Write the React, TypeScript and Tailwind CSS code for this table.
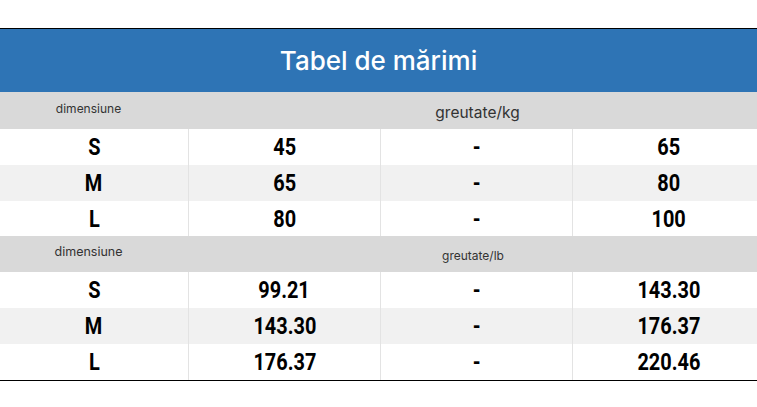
import React from "react";

const kg = [
  ["S", "45", "-", "65"],
  ["M", "65", "-", "80"],
  ["L", "80", "-", "100"],
];
const lb = [
  ["S", "99.21", "-", "143.30"],
  ["M", "143.30", "-", "176.37"],
  ["L", "176.37", "-", "220.46"],
];

const numFont = { fontFamily: 'Roboto, "DejaVu Sans Condensed", sans-serif' };

function Rows({ data, last }: { data: string[][]; last: string }) {
  return (
    <>
      {data.map((r, i) => (
        <div
          key={i}
          className={`grid grid-cols-[189px_192px_192px_1fr] ${i === 2 ? last : "h-[36px]"} ${i === 1 ? "bg-[#f1f1f1]" : "bg-white"}`}
        >
          {r.map((c, j) => (
            <div
              key={j}
              className={`flex items-center justify-center ${j < 3 ? "border-r border-[#e3e3e3]" : "pl-[7px]"}`}
            >
              <span
                className="inline-block scale-x-[0.83] text-[24px] leading-none font-bold text-black"
                style={numFont}
              >
                {c}
              </span>
            </div>
          ))}
        </div>
      ))}
    </>
  );
}

export default function App() {
  return (
    <div className="w-[757px] h-[407px] bg-white" style={{ fontFamily: 'Inter, "Noto Sans", sans-serif' }}>
      <div className="h-[28px]" />
      <div className="border-t border-black" />
      <div className="h-[63px] bg-[#2e74b5] flex items-center justify-center text-white text-[26px] font-medium">
        Tabel de mărimi
      </div>
      <div className="h-[37px] bg-[#d9d9d9] grid grid-cols-[189px_1fr] text-[#333]">
        <div className="flex items-center justify-center text-[12px] pb-[4px] pr-[12px]">dimensiune</div>
        <div className="flex items-center justify-center text-[15.5px] pt-[4px] pl-[9px]">greutate/kg</div>
      </div>
      <Rows data={kg} last="h-[35px]" />
      <div className="h-[36px] bg-[#d9d9d9] grid grid-cols-[189px_1fr] text-[#333]">
        <div className="flex items-center justify-center text-[12.5px] pb-[4px] pr-[12px]">dimensiune</div>
        <div className="flex items-center justify-center text-[12px] pt-[3px]">greutate/lb</div>
      </div>
      <Rows data={lb} last="h-[36px]" />
      <div className="border-t border-black" />
    </div>
  );
}
